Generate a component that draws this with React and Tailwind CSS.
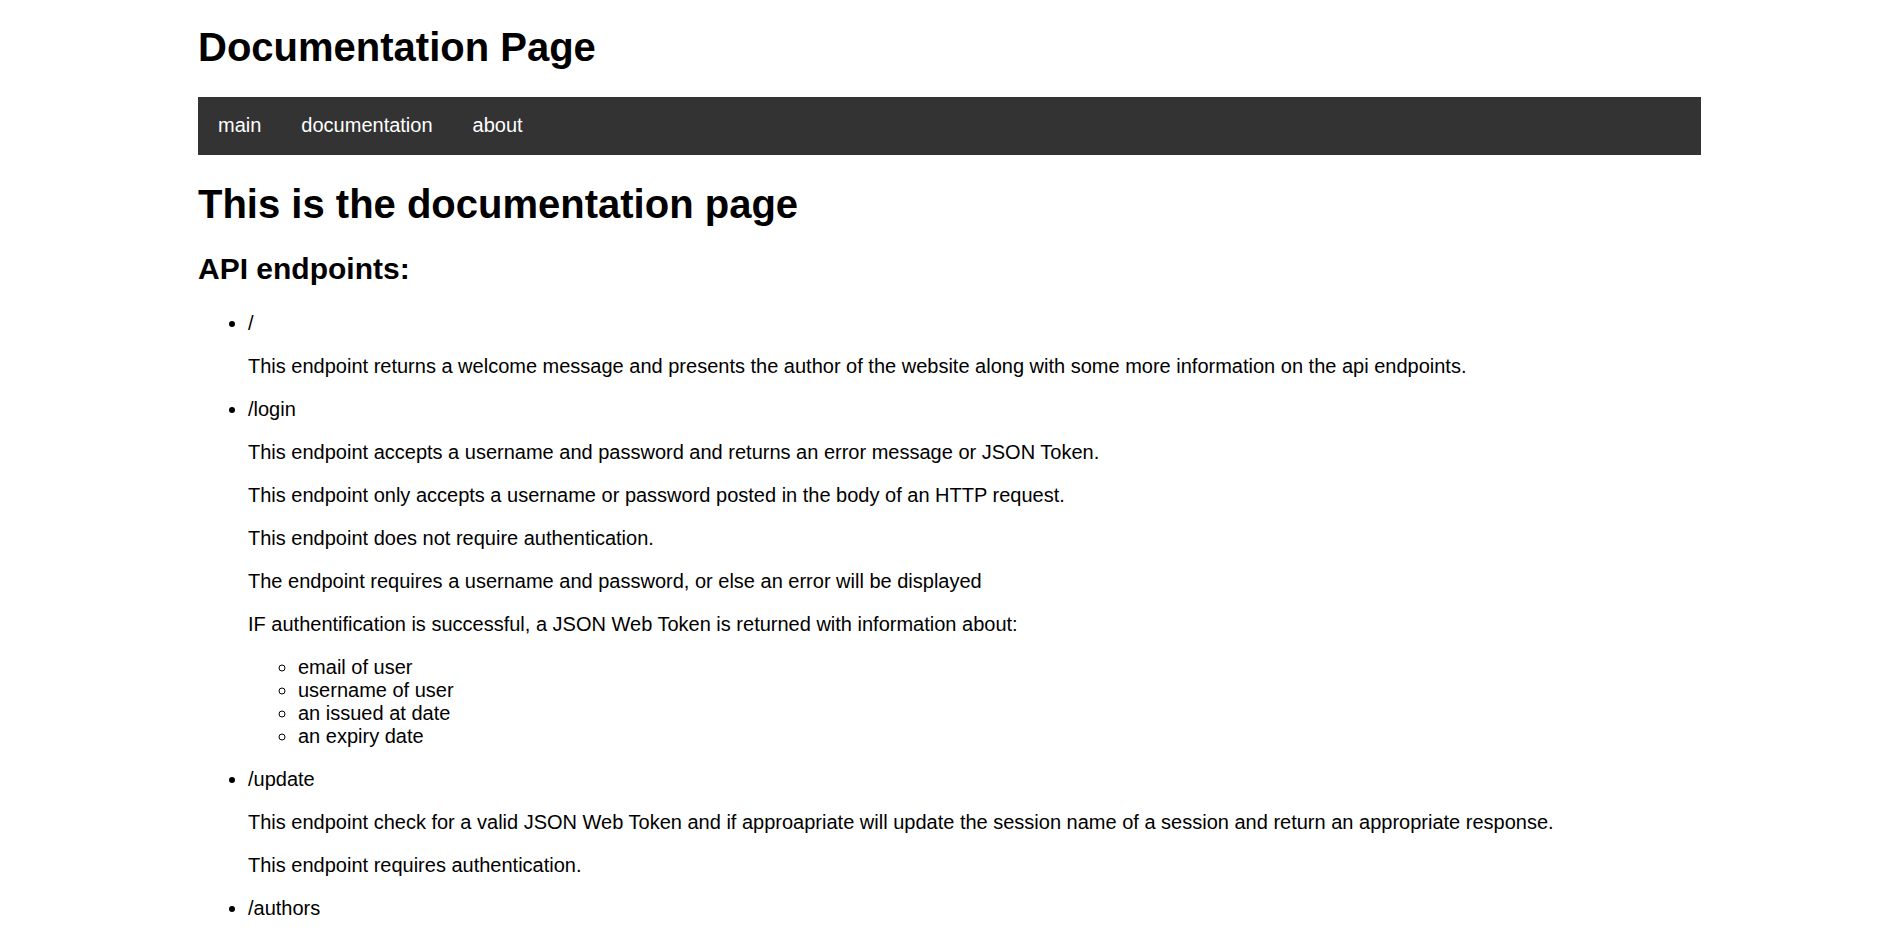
import React from 'react';

const links = ['main', 'documentation', 'about'];

function Endpoint({ path, children }) {
  return (
    <li>
      {path}
      {children}
    </li>
  );
}

export default function App() {
  return (
    <div className="min-h-screen bg-white pl-[198px] pr-[197px] text-black font-['Liberation_Sans',Arial,sans-serif]">
      <h1 className="pt-[24px] pb-[27px] text-[40px] font-bold leading-[46px]">Documentation Page</h1>

      <nav className="flex bg-[#333333]">
        {links.map((l) => (
          <a key={l} href="#" className="px-5 pt-[17px] pb-[18px] text-[20px] leading-[23px] text-white">
            {l}
          </a>
        ))}
      </nav>

      <h1 className="mt-[26px] mb-[25px] text-[40px] font-bold leading-[46px]">This is the documentation page</h1>

      <h2 className="mb-[26px] text-[30px] font-bold leading-[34px]">API endpoints:</h2>

      <ul className="list-disc pl-[50px] text-[20px] leading-[23px]">
        <Endpoint path="/">
          <p className="my-5">
            This endpoint returns a welcome message and presents the author of the website along with some more information on the api endpoints.
          </p>
        </Endpoint>

        <Endpoint path="/login">
          <p className="my-5">This endpoint accepts a username and password and returns an error message or JSON Token.</p>
          <p className="my-5">This endpoint only accepts a username or password posted in the body of an HTTP request.</p>
          <p className="my-5">This endpoint does not require authentication.</p>
          <p className="my-5">The endpoint requires a username and password, or else an error will be displayed</p>
          <p className="my-5">IF authentification is successful, a JSON Web Token is returned with information about:</p>
          <ul className="mb-5 list-[circle] pl-[50px]">
            <li>email of user</li>
            <li>username of user</li>
            <li>an issued at date</li>
            <li>an expiry date</li>
          </ul>
        </Endpoint>

        <Endpoint path="/update">
          <p className="my-5">
            This endpoint check for a valid JSON Web Token and if approapriate will update the session name of a session and return an appropriate response.
          </p>
          <p className="my-5">This endpoint requires authentication.</p>
        </Endpoint>

        <Endpoint path="/authors" />
      </ul>
    </div>
  );
}
